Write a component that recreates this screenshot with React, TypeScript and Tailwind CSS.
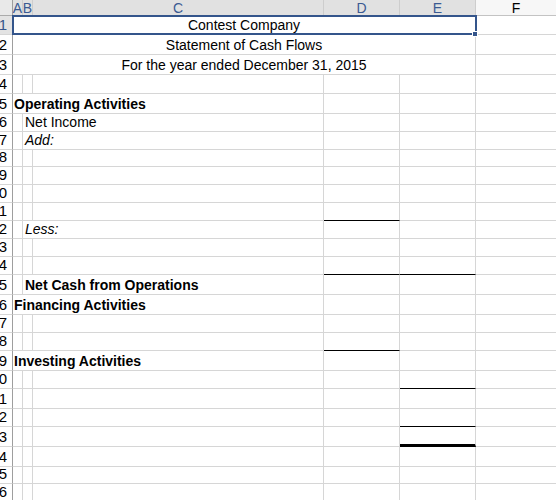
import React from "react";

type RowDef = {
  h: string;
  kind: "title" | "a" | "b" | "empty";
  text?: string;
  style?: "bold" | "italic" | "normal";
  d?: "black";
  e?: "black" | "thick";
};

const rows: RowDef[] = [
  { h: "h-[19px]", kind: "title", text: "Contest Company" },
  { h: "h-[20px]", kind: "title", text: "Statement of Cash Flows" },
  { h: "h-[20px]", kind: "title", text: "For the year ended December 31, 2015" },
  { h: "h-[19px]", kind: "empty" },
  { h: "h-[20px]", kind: "a", text: "Operating Activities", style: "bold" },
  { h: "h-[18px]", kind: "b", text: "Net Income", style: "normal" },
  { h: "h-[18px]", kind: "b", text: "Add:", style: "italic" },
  { h: "h-[17px]", kind: "empty" },
  { h: "h-[18px]", kind: "empty" },
  { h: "h-[18px]", kind: "empty" },
  { h: "h-[18px]", kind: "empty", d: "black" },
  { h: "h-[18px]", kind: "b", text: "Less:", style: "italic" },
  { h: "h-[18px]", kind: "empty" },
  { h: "h-[18px]", kind: "empty", d: "black", e: "black" },
  { h: "h-[20px]", kind: "b", text: "Net Cash from Operations", style: "bold" },
  { h: "h-[20px]", kind: "a", text: "Financing Activities", style: "bold" },
  { h: "h-[18px]", kind: "empty" },
  { h: "h-[18px]", kind: "empty", d: "black" },
  { h: "h-[20px]", kind: "a", text: "Investing Activities", style: "bold" },
  { h: "h-[18px]", kind: "empty", e: "black" },
  { h: "h-[20px]", kind: "empty" },
  { h: "h-[18px]", kind: "empty", e: "black" },
  { h: "h-[20px]", kind: "empty", e: "thick" },
  { h: "h-[20px]", kind: "empty" },
  { h: "h-[17px]", kind: "empty" },
  { h: "h-[18px]", kind: "empty" },
  { h: "h-[18px]", kind: "empty" },
];

const grid = "border-r border-r-[#d6d6d6] border-b border-b-[#d6d6d6]";

function textClass(style?: string) {
  if (style === "bold") return "font-bold";
  if (style === "italic") return "italic";
  return "";
}

function RowHead({ n, sel }: { n: number; sel: boolean }) {
  return (
    <div
      className={
        sel
          ? "w-[13px] shrink-0 overflow-hidden flex items-end justify-end pr-[5px] pb-px bg-[#e3e3e3] text-[#34558b] text-[15px] leading-[16px] border-r border-r-[#9e9e9e] border-b border-b-[#d6d6d6]"
          : "w-[13px] shrink-0 overflow-hidden flex items-end justify-end pr-[5px] pb-px bg-white text-black text-[15px] leading-[16px] border-r border-r-[#9e9e9e] border-b border-b-[#d6d6d6]"
      }
    >
      <span className="whitespace-nowrap">{n}</span>
    </div>
  );
}

function DCell({ d }: { d?: "black" }) {
  return (
    <div
      className={
        d === "black"
          ? "w-[76px] shrink-0 border-r border-r-[#d6d6d6] border-b border-b-black"
          : "w-[76px] shrink-0 " + grid
      }
    />
  );
}

function ECell({ e }: { e?: "black" | "thick" }) {
  if (e === "thick")
    return <div className="w-[76px] shrink-0 border-r border-r-[#d6d6d6] border-b-[3px] border-b-black" />;
  if (e === "black")
    return <div className="w-[76px] shrink-0 border-r border-r-[#d6d6d6] border-b border-b-black" />;
  return <div className={"w-[76px] shrink-0 " + grid} />;
}

function Row({ r, i }: { r: RowDef; i: number }) {
  let middle: React.ReactNode;
  if (r.kind === "title") {
    middle = (
      <div className="w-[463px] shrink-0 flex items-end justify-center pb-px leading-[16px] border-r border-r-[#d6d6d6] border-b border-b-[#d6d6d6] whitespace-nowrap">
        {r.text}
      </div>
    );
  } else {
    let left: React.ReactNode;
    if (r.kind === "a") {
      left = (
        <div
          className={
            "w-[311px] shrink-0 flex items-end pl-[1px] pb-px leading-[16px] whitespace-nowrap " +
            grid +
            " " +
            textClass(r.style)
          }
        >
          {r.text}
        </div>
      );
    } else if (r.kind === "b") {
      left = (
        <>
          <div className={"w-[10px] shrink-0 " + grid} />
          <div
            className={
              "w-[301px] shrink-0 flex items-end pl-[2px] pb-px leading-[16px] whitespace-nowrap " +
              grid +
              " " +
              textClass(r.style)
            }
          >
            {r.text}
          </div>
        </>
      );
    } else {
      left = (
        <>
          <div className={"w-[10px] shrink-0 " + grid} />
          <div className={"w-[10px] shrink-0 " + grid} />
          <div className={"w-[291px] shrink-0 " + grid} />
        </>
      );
    }
    middle = (
      <>
        {left}
        <DCell d={r.d} />
        <ECell e={r.e} />
      </>
    );
  }
  return (
    <div className={"flex " + r.h}>
      <RowHead n={i + 1} sel={i === 0} />
      {middle}
      <div className="flex-1 border-b border-b-[#d6d6d6]" />
    </div>
  );
}

function ColHead({ label, w, sel }: { label: string; w: string; sel: boolean }) {
  return (
    <div
      className={
        sel
          ? w + " shrink-0 flex items-center justify-center bg-[#e1e1e1] text-[#3b5a92] border-r border-r-[#cdcdcd] border-b border-b-[#ababab]"
          : w + " shrink-0 flex items-center justify-center bg-[#f7f7f7] text-black border-b border-b-[#c3c3c3]"
      }
    >
      <span className="whitespace-nowrap leading-none">{label}</span>
    </div>
  );
}

export default function App() {
  return (
    <div className="relative w-[556px] h-[500px] overflow-hidden bg-white text-black text-[14px] font-['Liberation_Sans',Arial,sans-serif]">
      <div className="flex h-[16px]">
        <div className="w-[13px] shrink-0 bg-[#e9e9e9] border-r border-r-[#9e9e9e] border-b border-b-[#ababab]" />
        <ColHead label="A" w="w-[10px]" sel={true} />
        <ColHead label="B" w="w-[10px]" sel={true} />
        <ColHead label="C" w="w-[291px]" sel={true} />
        <ColHead label="D" w="w-[76px]" sel={true} />
        <ColHead label="E" w="w-[76px]" sel={true} />
        <ColHead label="F" w="flex-1" sel={false} />
      </div>
      {rows.map((r, i) => (
        <Row key={i} r={r} i={i} />
      ))}
      <div className="absolute left-[12px] top-[15px] w-[465px] h-[20px] border-2 border-[#34558b]" />
      <div className="absolute left-[472px] top-[31px] w-[6px] h-[6px] bg-[#34558b] border border-white" />
    </div>
  );
}
